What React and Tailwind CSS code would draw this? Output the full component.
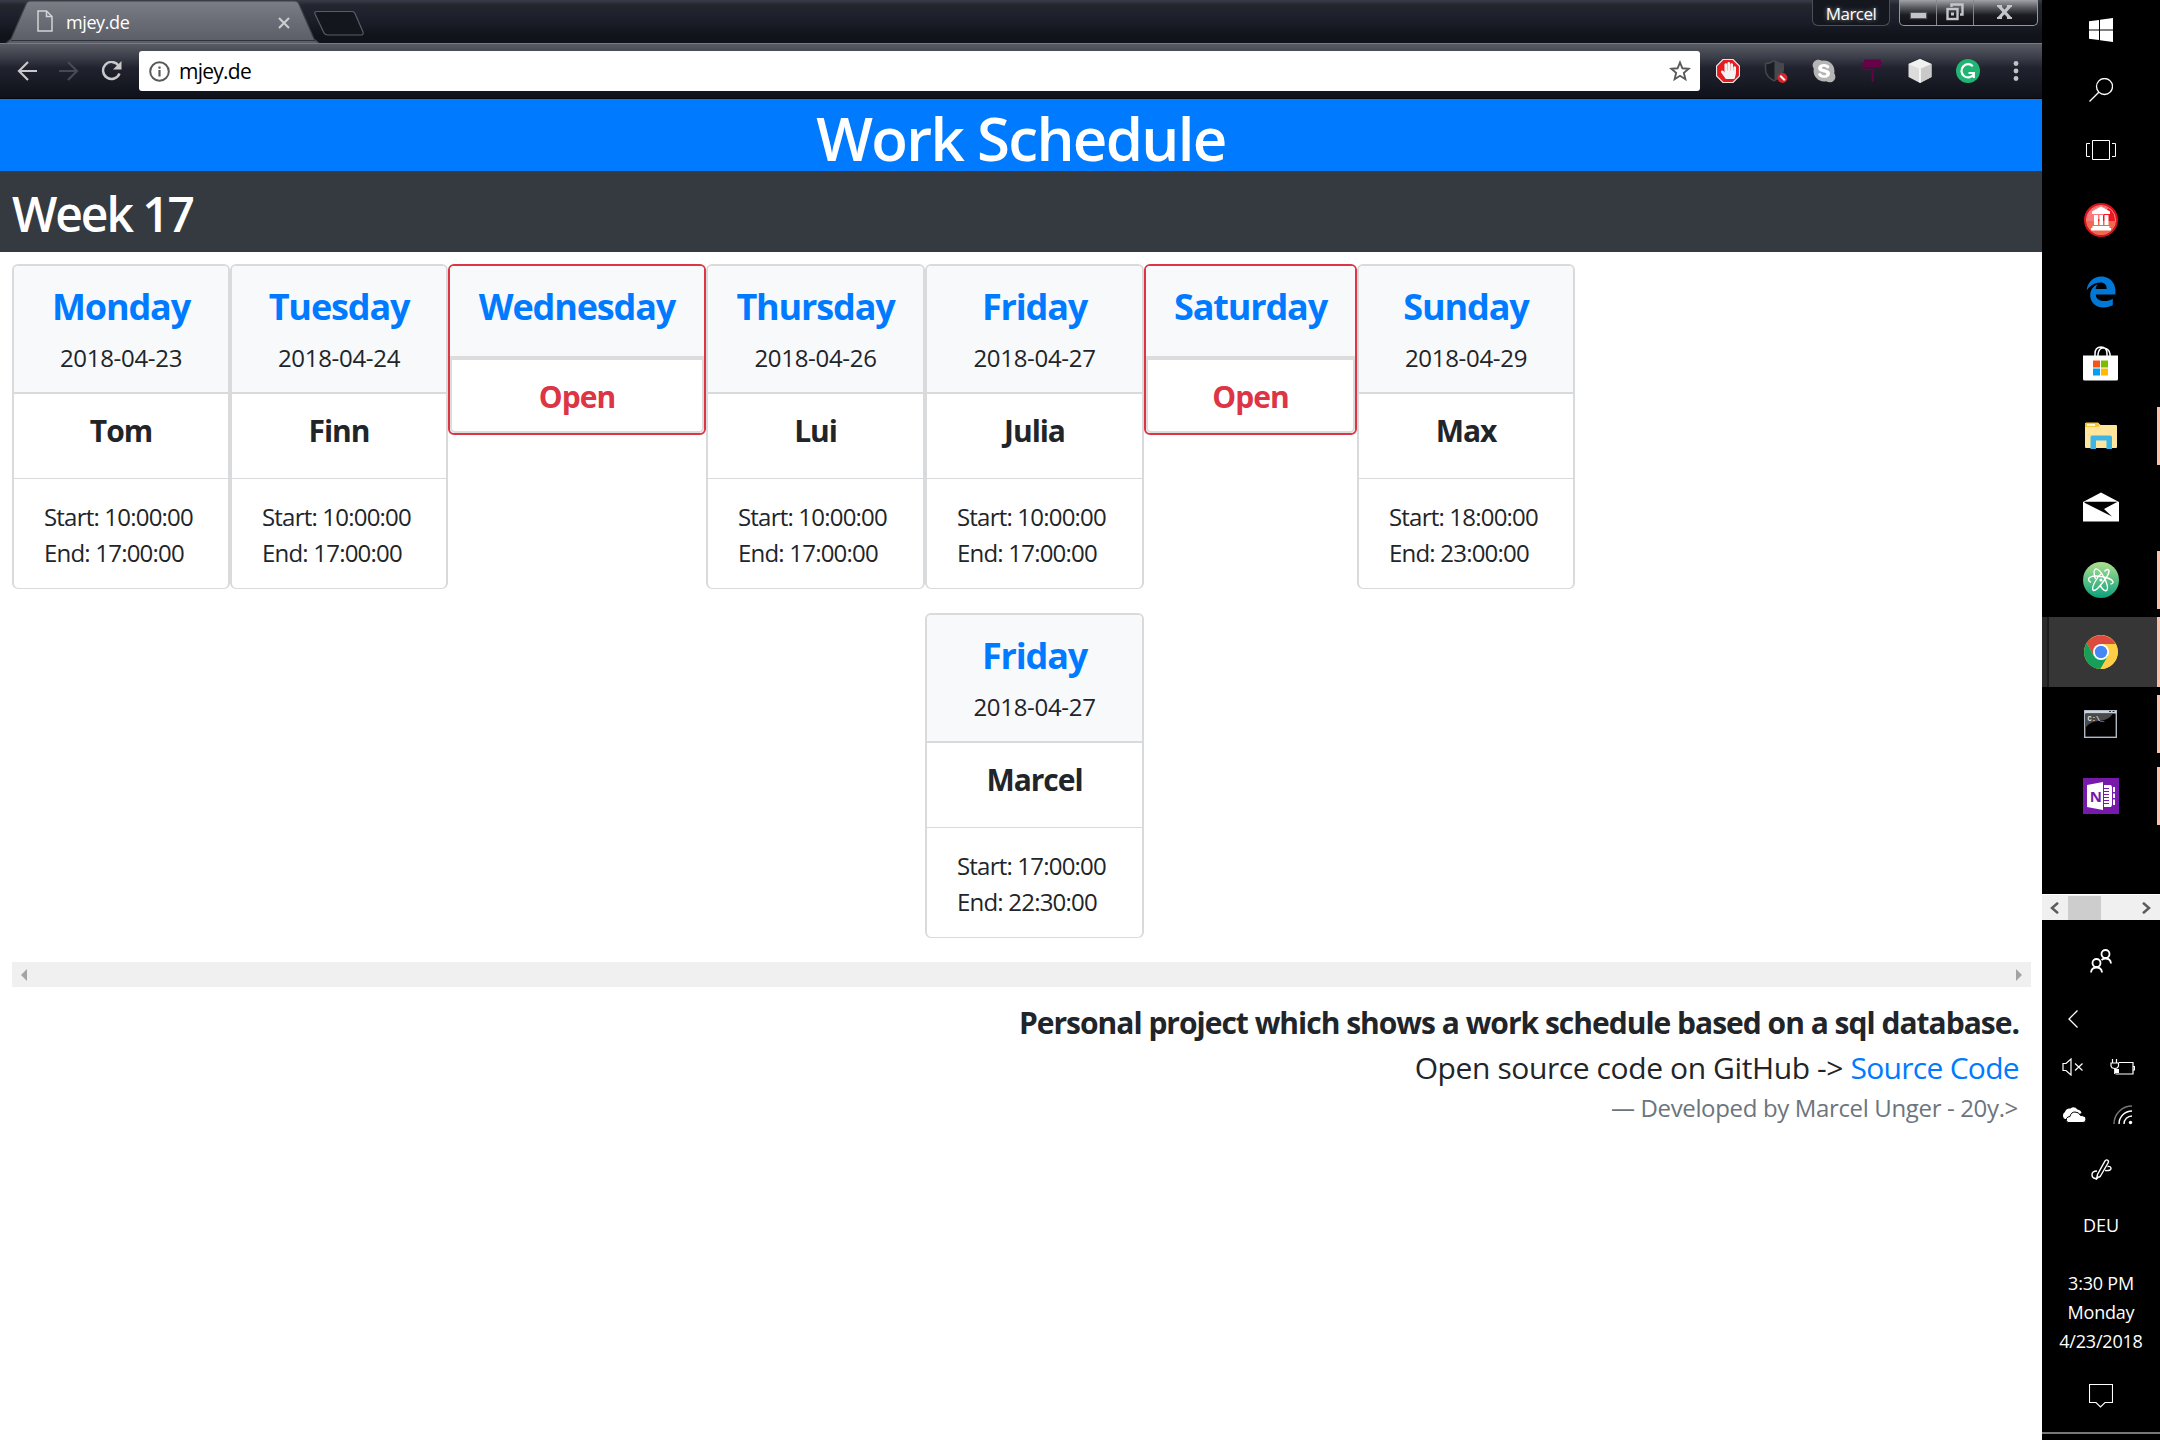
import React from "react";
import { FaEdgeLegacy, FaSkype, FaHandPaper } from "react-icons/fa";

const days = [
  { width: "w-[218px]", shifts: [{ day: "Monday", date: "2018-04-23", name: "Tom", start: "10:00:00", end: "17:00:00" }] },
  { width: "w-[218px]", shifts: [{ day: "Tuesday", date: "2018-04-24", name: "Finn", start: "10:00:00", end: "17:00:00" }] },
  { width: "w-[258px]", shifts: [{ day: "Wednesday", open: true }] },
  { width: "w-[219px]", shifts: [{ day: "Thursday", date: "2018-04-26", name: "Lui", start: "10:00:00", end: "17:00:00" }] },
  {
    width: "w-[219px]",
    shifts: [
      { day: "Friday", date: "2018-04-27", name: "Julia", start: "10:00:00", end: "17:00:00" },
      { day: "Friday", date: "2018-04-27", name: "Marcel", start: "17:00:00", end: "22:30:00" },
    ],
  },
  { width: "w-[213px]", shifts: [{ day: "Saturday", open: true }] },
  { width: "w-[218px]", shifts: [{ day: "Sunday", date: "2018-04-29", name: "Max", start: "18:00:00", end: "23:00:00" }] },
];

function DayTitle({ children }) {
  return (
    <h4 className="whitespace-nowrap text-center text-[36px] font-bold leading-[44px] tracking-[-1.15px] text-[#007bff]">{children}</h4>
  );
}

function OpenCard({ shift }) {
  return (
    <article className="h-[171px] overflow-hidden rounded-[6px] border-2 border-[#dc3545] bg-white">
      <header className="h-[90px] bg-[#f8f9fa] pt-[19px]">
        <DayTitle>{shift.day}</DayTitle>
      </header>
      <div className="h-[77px] rounded-b-[5px] border-2 border-t-4 border-[#dcdcdc] pt-[19px] text-center text-[30px] font-bold leading-9 tracking-[-1px] text-[#dc3545]">
        Open
      </div>
    </article>
  );
}

function ShiftCard({ shift }) {
  return (
    <article className="h-[325px] overflow-hidden rounded-[6px] border-2 border-b border-[#d9dadb] bg-white text-[#212529]">
      <header className="h-[128px] border-b-2 border-[#d9dadb] bg-[#f8f9fa] pt-[19px]">
        <DayTitle>{shift.day}</DayTitle>
        <p className="mt-[11px] text-center text-[24px] leading-9 tracking-[-0.3px]">{shift.date}</p>
      </header>
      <h5 className="h-[85px] border-b border-[#d9dadb] pt-[19px] text-center text-[30px] font-bold leading-9 tracking-[-1.05px]">
        {shift.name}
      </h5>
      <div className="whitespace-nowrap pl-[30px] pt-[20px] text-[24px] leading-9 tracking-[-0.8px]">
        <p>Start: {shift.start}</p>
        <p>End: {shift.end}</p>
      </div>
    </article>
  );
}

function BrowserTabs() {
  return (
    <div className="flex h-[43px] bg-[linear-gradient(#3a3c48,#23252f_5px,#1c1e29_20px,#11131a_36px,#11131a)]">
      <div className="relative h-[43px] w-[316px]">
        <svg className="absolute left-0 top-0" width="370" height="44" viewBox="0 0 370 44" fill="none">
          <defs>
            <linearGradient id="tab" x1="0" y1="0" x2="0" y2="1">
              <stop offset="0" stopColor="#7b7d85" />
              <stop offset="1" stopColor="#5a5c66" />
            </linearGradient>
          </defs>
          <path d="M7 43L11 39L26 4Q27 1 30 1H295Q298 1 299 4L314 39L319 43Z" fill="url(#tab)" />
          <path d="M6 43L11 39L26 4Q27 1 30 1H295Q298 1 299 4L314 39L319 43" stroke="#3d3f49" strokeWidth="1.2" />
          <path d="M11 40.5H315" stroke="#30323c" strokeWidth="1" />
          <path d="M317 11.5H352Q354 11.5 355 13.500L363 32Q364 35 361 35H328Q325 35 324 33L315 14Q314 11.500 317 11.500Z" stroke="#5b5d65" strokeWidth="1.2" fill="#14161e" />
        </svg>
        <div className="relative flex h-[43px] items-center pb-[1px] pl-[37px] pr-[26px]">
          <svg width="16" height="22" viewBox="0 0 16 22" fill="none" stroke="#d4d4d6" strokeWidth="1.5">
            <path d="M1 1H9.500L15 6.500V21H1Z" />
            <path d="M9.500 1V6.500H15" />
          </svg>
          <span className="ml-[13px] mt-[2px] text-[18px] leading-6 tracking-[-0.4px] text-white">mjey.de</span>
          <svg className="ml-auto mt-[3px]" width="12" height="12" viewBox="0 0 12 12" stroke="#cfcfd2" strokeWidth="2">
            <path d="M1 1L11 11M11 1L1 11" />
          </svg>
        </div>
      </div>
      <div className="ml-auto flex items-start pr-[4px]">
        <div className="h-[26px] w-[78px] rounded-b-[6px] border border-t-0 border-[#4c4e56] bg-[#15171f] text-center text-[17px] leading-[28px] tracking-[-0.5px] text-white [text-shadow:0_0_4px_#999]">
          Marcel
        </div>
        <div className="ml-[9px] flex h-[26px] overflow-hidden rounded-b-[5px] border border-t-0 border-[#96979b] bg-[linear-gradient(#a2a3a8,#5d5f66_7px,#1b1c22_15px,#101117)]">
          <div className="flex w-[37px] items-center justify-center border-r border-[#85868a] pt-[6px]">
            <div className="h-[5px] w-[15px] bg-[#c4c5c8] shadow-[0_0_1px_1px_#55565c]" />
          </div>
          <div className="flex w-[37px] items-center justify-center border-r border-[#85868a] pb-px">
            <svg width="18" height="18" viewBox="0 0 18 18" fill="none" stroke="#c4c5c8" strokeWidth="2.400">
              <path d="M5.500 4V1.500H16.500V11.500H14" />
              <rect x="1.500" y="6" width="10" height="10" />
              <rect x="5" y="9.500" width="3" height="3" fill="#c4c5c8" stroke="none" />
            </svg>
          </div>
          <div className="flex w-[63px] items-center justify-center pb-[2px] pr-[2px]">
            <svg width="15" height="14" viewBox="0 0 15 14" stroke="#c4c5c8" strokeWidth="3.200">
              <path d="M2 1L13 13M13 1L2 13" />
              <path d="M0 1H5M10 1H15M0 13H5M10 13H15" strokeWidth="2" />
            </svg>
          </div>
        </div>
      </div>
    </div>
  );
}

function Extension({ children }) {
  return <div className="flex w-12 items-center justify-center">{children}</div>;
}

function Toolbar() {
  return (
    <div className="flex h-14 items-center border-t border-[#797b82] bg-[linear-gradient(#585a64,#3c3e49_13px,#20222e_24px,#181a24_38px,#10121a_54px,#000_55px)] pb-px">
      <div className="flex w-[139px] items-center pl-[17px]">
        <svg width="20" height="20" viewBox="0 0 20 20" fill="none" stroke="#c9c9cb" strokeWidth="2.200">
          <path d="M20 10H2M11 1L2 10L11 19" />
        </svg>
        <svg className="ml-[22px]" width="20" height="20" viewBox="0 0 20 20" fill="none" stroke="#484a53" strokeWidth="2.200">
          <path d="M0 10H18M9 1L18 10L9 19" />
        </svg>
        <svg className="ml-[22px]" width="21" height="20" viewBox="0 0 21 20" fill="none" stroke="#c9c9cb" strokeWidth="2.400">
          <path d="M17.500 4.500A8.500 8.500 0 1 0 18.500 12.500" />
          <path d="M20.500 0V8.500H12Z" fill="#c9c9cb" stroke="none" />
        </svg>
      </div>
      <div className="flex h-10 w-[1561px] items-center rounded-[3px] bg-white pl-[10px] pr-[9px]">
        <svg width="21" height="21" viewBox="0 0 21 21" fill="none" stroke="#5a5a5a" strokeWidth="2">
          <circle cx="10.500" cy="10.500" r="9.300" />
          <path d="M10.500 9V15.500M10.500 5.500V7.700" strokeWidth="2.200" />
        </svg>
        <span className="ml-[9px] text-[21px] leading-[30px] tracking-[-0.75px] text-black">mjey.de</span>
        <svg className="ml-auto" width="22" height="22" viewBox="0 0 22 22" fill="none" stroke="#5a5a5a" strokeWidth="1.900">
          <path d="M11 2.500L13.400 8.300L19.700 8.800L14.900 12.900L16.400 19.200L11 15.800L5.600 19.200L7.100 12.900L2.300 8.800L8.600 8.300Z" />
        </svg>
      </div>
      <div className="ml-[4px] flex h-[26px]">
        <Extension>
          <div className="relative">
            <svg width="24" height="24" viewBox="0 0 24 24">
              <path d="M7 .5H17L23.500 7V17L17 23.500H7L.5 17V7Z" fill="#e61b20" stroke="#e8e8e8" strokeWidth="1.200" />
            </svg>
            <FaHandPaper className="absolute left-[5px] top-[2px] h-[19px] w-[15px] text-[#f3f3f3]" />
          </div>
        </Extension>
        <Extension>
          <svg width="24" height="24" viewBox="0 0 24 24">
            <path d="M10.500 1.500C7 3.800 4 4.500 1.500 4.500V11Q2 18 10.500 22" fill="#1b1d25" stroke="#46484d" strokeWidth="1.500" />
            <path d="M10.500 .5C14 3.500 17 4 20 4V11Q19 18 10.500 22.500Z" fill="#46484d" />
            <circle cx="18.500" cy="19" r="5" fill="#d9252b" />
            <path d="M16.200 16.700L20.800 21.300" stroke="#fff" strokeWidth="2" />
          </svg>
        </Extension>
        <Extension>
          <div className="relative flex h-[24px] w-[24px] items-center justify-center">
            <div className="absolute h-[16px] w-[14px] rounded-full bg-white" />
            <FaSkype className="relative h-[26px] w-[24px] text-[#b5b5b5]" />
          </div>
        </Extension>
        <Extension>
          <svg width="24" height="24" viewBox="0 0 24 24" fill="none" stroke="#660348">
            <path d="M4 1.500Q4 .5 5 .5H20Q21 .5 21 1.500V3H22V5H21V7Q21 8 20 8H5Q4 8 4 7Z" fill="#660348" stroke="none" />
            <path d="M4 4.500H1.800V10.500H12.700" strokeWidth="1.300" />
            <path d="M12.700 10.500V23" strokeWidth="2.200" />
          </svg>
        </Extension>
        <Extension>
          <svg width="24" height="24" viewBox="0 0 24 24">
            <path d="M12 0L23.500 5V18L12 24L.5 18V5Z" fill="#dcdcdc" />
            <path d="M12 0L23.500 5L12 10L.5 5Z" fill="#f1f1f1" />
            <path d="M12 10L23.500 5V18L12 24Z" fill="#c9c9c9" />
            <path d="M12 10V23.500" stroke="#fff" strokeWidth="1.500" />
          </svg>
        </Extension>
        <Extension>
          <svg width="24" height="24" viewBox="0 0 24 24" fill="none" stroke="#fff" strokeWidth="2.200">
            <circle cx="12" cy="12" r="12" fill="#20b573" stroke="none" />
            <path d="M16.800 7.200A6.600 6.600 0 1 0 17.500 15.600M12.500 14H17.800V19" />
          </svg>
        </Extension>
        <Extension>
          <svg width="6" height="20" viewBox="0 0 6 20" fill="#c4c4c6">
            <circle cx="3" cy="2.500" r="2.400" />
            <circle cx="3" cy="10" r="2.400" />
            <circle cx="3" cy="17.500" r="2.400" />
          </svg>
        </Extension>
      </div>
    </div>
  );
}

function Page() {
  return (
    <main className="flex-1 bg-white">
      <h1 className="h-[72px] bg-[#007bff] text-center text-[60px] font-semibold leading-[79px] tracking-[-1.7px] text-white">Work Schedule</h1>
      <h2 className="h-[81px] bg-[#343a40] pl-[12px] text-[48px] font-semibold leading-[85px] tracking-[-2.1px] text-white">Week 17</h2>
      <section className="flex h-[710px] items-start px-3 pt-3">
        {days.map((column) => (
          <div key={column.shifts[0].day} className={`flex flex-col gap-6 ${column.width}`}>
            {column.shifts.map((shift, i) =>
              shift.open ? <OpenCard key={i} shift={shift} /> : <ShiftCard key={i} shift={shift} />
            )}
          </div>
        ))}
      </section>
      <div className="mx-3 mr-[11px] flex h-[25px] items-center justify-between bg-[#f0f0f0] px-[9px]">
        <svg width="6" height="12" viewBox="0 0 6 12" fill="#a3a3a3"><path d="M6 0V12L0 6Z" /></svg>
        <svg width="6" height="12" viewBox="0 0 6 12" fill="#a3a3a3"><path d="M0 0V12L6 6Z" /></svg>
      </div>
      <footer className="pr-[23px] pt-[13px] text-right text-[#212529]">
        <p className="text-[30px] font-bold leading-[45px] tracking-[-1px]">Personal project which shows a work schedule based on a sql database.</p>
        <p className="text-[30px] leading-[45px] tracking-[-0.4px]">
          Open source code on GitHub -&gt; <a className="tracking-[-0.7px] text-[#007bff]">Source Code</a>
        </p>
        <p className="pr-px text-[24px] leading-9 tracking-[-0.35px] text-[#6c757d]">— Developed by Marcel Unger - 20y.&gt;</p>
      </footer>
    </main>
  );
}

function TaskSlot({ children, running, active }) {
  return (
    <div className="flex h-[72px] items-center">
      <div className={active ? "h-[70px] w-[5px] bg-[#2b2b2b]" : "w-[5px]"} />
      <div className={active ? "flex h-[70px] w-[110px] items-center justify-center border-l-2 border-[#1b1b1b] bg-[#363636] pr-[4px]" : "flex w-[110px] items-center justify-center pr-[2px]"}>
        {children}
      </div>
      {running && <div className={active ? "h-[70px] w-[3px] bg-[#ffbfab]" : "h-[58px] w-[3px] bg-[#ffbfab]"} />}
    </div>
  );
}

function Taskbar() {
  return (
    <aside className="flex w-[118px] flex-col bg-black text-white">
      <div className="flex h-[60px] items-center justify-center">
        <svg width="24" height="24" viewBox="0 0 24 24" fill="#fff">
          <path d="M0 3.300L10 2V11.400H0ZM11 1.800L24 0V11.400H11ZM0 12.400H10V22L0 20.700ZM11 12.400H24V24L11 22.200Z" />
        </svg>
      </div>
      <div className="flex h-[60px] items-center justify-center">
        <svg width="24" height="24" viewBox="0 0 24 24" fill="none" stroke="#fff" strokeWidth="1.300">
          <circle cx="15.500" cy="8.500" r="8" />
          <path d="M9.800 14.200L.5 23.500" />
        </svg>
      </div>
      <div className="flex h-[60px] items-center justify-center">
        <svg width="30" height="20" viewBox="0 0 30 20" fill="none" stroke="#fff">
          <path d="M6.500 .5H23.500V19.500H6.500ZM4 3.500H.5V16.500H4M26 3.500H29.500V16.500H26" />
        </svg>
      </div>
      <div className="mt-[4px]">
        <TaskSlot>
          <svg className="mb-px" width="34" height="34" viewBox="0 0 34 34">
            <circle cx="17" cy="17" r="17" fill="#d8131b" />
            <circle cx="17" cy="17" r="14.500" fill="#ee1620" stroke="#f58a86" strokeWidth="1" />
            <path d="M3 18H31A14 14 0 0 1 3 18Z" fill="#f0694f" />
            <path d="M3 18A14 14 0 0 1 24 5Q20 14 12 18Z" fill="#f77b7d" />
            <path d="M17 3.500L26 8.500V11H8V8.500ZM10 12H14V22H10ZM15.500 12H19V22H15.500ZM20.500 12H24.500V22H20.500ZM8.500 23H25.500V25H27V27.500H7V25H8.500Z" fill="#fff" />
          </svg>
        </TaskSlot>
        <TaskSlot>
          <FaEdgeLegacy className="h-[34px] w-[32px] text-[#0078d7]" />
        </TaskSlot>
        <TaskSlot>
          <svg className="mb-[2px]" width="36" height="36" viewBox="0 0 36 36">
            <path d="M12 12V9Q12 2 18 2Q24 2 24 9V12M15 12V9Q16 3 20 3Q26 3 27 9V12" fill="none" stroke="#fff" strokeWidth="1.500" />
            <path d="M0 10.500H35V34Q35 35.500 33.500 35.500H1.500Q0 35.500 0 34Z" fill="#fff" />
            <path d="M10 15.500H17V22.500H10Z" fill="#f65314" />
            <path d="M18 15.500H25V22.500H18Z" fill="#7cbb00" />
            <path d="M10 23.500H17V30.500H10Z" fill="#00a1f1" />
            <path d="M18 23.500H25V30.500H18Z" fill="#ffbb00" />
          </svg>
        </TaskSlot>
        <TaskSlot running>
          <svg width="32" height="28" viewBox="0 0 32 28">
            <path d="M1 1H13L15.500 3H31Q32 3 32 4V25Q32 26 31 26H1Q0 26 0 25V2Q0 1 1 1Z" fill="#ffe69c" />
            <path d="M1 .5H13L15.500 3L13 5H0V1.500Z" fill="#f9c63a" />
            <path d="M2 2.200H10V3.800H2Z" fill="#fff" />
            <path d="M5.500 27V15Q5.500 13.500 7 13.500H25Q27 13.500 27 15V27H21.500V18.500H11V27Z" fill="#3eb5e6" />
          </svg>
        </TaskSlot>
        <TaskSlot>
          <svg className="mb-[3px]" width="36" height="30" viewBox="0 0 36 30">
            <path d="M0 10L18 .5L36 10V29.500H0Z" fill="#fff" />
            <path d="M1.500 9.800H34.500L21 17L29 24.500L1.500 10.800Z" fill="#000" />
          </svg>
        </TaskSlot>
        <TaskSlot running>
          <svg width="36" height="36" viewBox="0 0 36 36" fill="none" stroke="#fff" strokeWidth="1.400">
            <defs>
              <linearGradient id="atom" x1="0" y1="0" x2="0" y2="1">
                <stop offset="0" stopColor="#aee08e" />
                <stop offset="1" stopColor="#0aa07a" />
              </linearGradient>
            </defs>
            <circle cx="18" cy="18" r="18" fill="url(#atom)" stroke="none" />
            <path d="M8 20.500Q4 18 6.500 15.500Q10 13 18 14.500Q28 16 30 19.500Q30.500 21.500 27.500 22" />
            <path d="M12.500 17Q9.500 9 12.500 7Q15.500 6 20.500 14.500Q26 24.500 24 28Q21.500 30.500 17 23.500" />
            <path d="M21.500 9.500Q24.500 6 26 8.500Q26.500 12 20 20Q13.500 29 10.500 28.500Q8 26.500 12.500 19Q15 14 19 11" />
            <circle cx="18" cy="18" r="1.600" fill="#fff" stroke="none" />
          </svg>
        </TaskSlot>
        <TaskSlot running active>
          <svg width="34" height="34" viewBox="0 0 34 34">
            <circle cx="17" cy="17" r="17" fill="#ffce44" />
            <path d="M17 17V9H31.700A17 17 0 0 0 2.600 8.100L10 21Z" fill="#db4b3f" />
            <path d="M2.600 8.100A17 17 0 0 0 16.500 34L24 21L17 17L10 21Z" fill="#159f5b" />
            <path d="M31.700 9H17L24 21L16.500 34A17 17 0 0 0 31.700 9Z" fill="#ffce44" />
            <circle cx="17" cy="17" r="8" fill="#fff" />
            <circle cx="17" cy="17" r="6.200" fill="#4587f4" />
          </svg>
        </TaskSlot>
        <TaskSlot running>
          <svg className="mb-px mr-px" width="33" height="28" viewBox="0 0 33 28">
            <rect x=".7" y=".7" width="31.600" height="26.600" fill="#000" stroke="#aebac3" strokeWidth="1.400" />
            <path d="M1 1H32V3.500H1Z" fill="#cdd5db" />
            <path d="M2 3.500H29Q24 11 14 11Q6 12 2 17Z" fill="#4a4a4a" />
            <path d="M25 1.500H27M28.500 1.500H30.500" stroke="#333" />
            <text x="3.500" y="10.500" fontSize="7" fontWeight="700" fill="#e6e6e6" fontFamily="Liberation Mono, monospace">C:\_</text>
          </svg>
        </TaskSlot>
        <TaskSlot running>
          <svg width="36" height="36" viewBox="0 0 36 36">
            <path d="M0 0H36V36H0Z" fill="#7719aa" />
            <path d="M4 7L20 4V32L4 29Z" fill="#fff" />
            <path d="M21 7H28L29 9V27L28 29H21ZM30 9H32V14H30ZM30 15.500H32V20H30ZM30 21.500H32V27H30Z" fill="#fff" />
            <path d="M21 10.500H26M21 13.500H26M21 16.500H26M21 19.500H26M21 22.500H26M21 25.500H26" stroke="#7719aa" strokeWidth="1" />
            <text x="6.800" y="23.500" fontSize="15" fontWeight="700" fill="#7719aa" fontFamily="Open Sans, sans-serif">N</text>
          </svg>
        </TaskSlot>
      </div>
      <div className="mt-[62px] flex h-[26px] items-center border-t border-white bg-[#f0f0f0]">
        <svg className="ml-[8px]" width="9" height="12" viewBox="0 0 9 12" fill="none" stroke="#5c5c5c" strokeWidth="2.500"><path d="M8 .8L2 6L8 11.200" /></svg>
        <div className="ml-[9px] h-6 w-[33px] bg-[#cdcdcd]" />
        <svg className="ml-auto mr-[9px]" width="9" height="12" viewBox="0 0 9 12" fill="none" stroke="#5c5c5c" strokeWidth="2.500"><path d="M1 .8L7 6L1 11.200" /></svg>
      </div>
      <div className="flex h-[82px] items-center justify-center">
        <svg width="22" height="24" viewBox="0 0 22 24" fill="none" stroke="#fff" strokeWidth="1.800">
          <circle cx="15.500" cy="5" r="4" />
          <circle cx="6.500" cy="14" r="4" />
          <path d="M1 23.500Q1.500 18.500 6.500 18.500Q11.500 18.500 12 23.500M11.500 11Q13 9.500 15.500 9.500Q20.500 9.500 21 14.500" />
        </svg>
      </div>
      <div className="flex h-[33px] items-center pl-[26px]">
        <svg width="10" height="18" viewBox="0 0 10 18" fill="none" stroke="#fff" strokeWidth="1.300"><path d="M9.500 .5L1 9L9.500 17.500" /></svg>
      </div>
      <div className="flex h-16 items-center pl-[20px]">
        <svg width="22" height="18" viewBox="0 0 22 18" fill="none" stroke="#fff" strokeWidth="1.200">
          <path d="M1 5.500H4L9 1V17L4 12.500H1ZM13 5.500L20.500 12.500M20.500 5.500L13 12.500" />
        </svg>
        <svg className="ml-[26px]" width="25" height="18" viewBox="0 0 25 18" fill="none" stroke="#fff" strokeWidth="1.200">
          <path d="M9 4.500H23V16H5.500M23 8.500H24.500V12H23" />
          <path d="M2.500 1V5M6.500 1V5M1 5H8.500V8Q8 10.500 4.700 10.500Q1.500 10.500 1 8ZM4.700 10.500V16" />
          <path d="M5 11H9V15H5Z" fill="#fff" stroke="none" />
        </svg>
      </div>
      <div className="flex h-[32px] items-center pl-[20px]">
        <svg width="24" height="16" viewBox="0 0 24 16">
          <path d="M3 12A4 4 0 0 1 3 5Q4 1 8.500 1.500Q12-1.500 15.500 2.500Q19 3 19.500 6L8 12Z" fill="#fff" />
          <path d="M6 15.500Q3.500 14 4.500 11.500Q5.500 9.500 8 9.500Q9 5 13 5Q17 5 18.500 8.500Q23.500 8.500 24 12Q24 15.500 21 15.500Z" fill="#fff" stroke="#000" />
        </svg>
        <svg className="ml-[27px]" width="20" height="20" viewBox="0 0 20 20" fill="none" stroke="#fff" strokeWidth="1.400">
          <path d="M1 19A18 18 0 0 1 19 1" stroke="#777" />
          <path d="M6 19A13 13 0 0 1 19 6M11 19A8 8 0 0 1 19 11" />
          <circle cx="17.500" cy="17.500" r="1.700" fill="#fff" stroke="none" />
        </svg>
      </div>
      <div className="flex h-[76px] items-center justify-center">
        <svg width="21" height="21" viewBox="0 0 21 21" fill="none" stroke="#fff" strokeWidth="1.400">
          <path d="M7.500 18L5.500 20L6.500 15.500L14 2Q15.500 0 17 1.500Q18 2.500 17 4L9.500 17Q8.500 18.500 7.500 18Z" />
          <path d="M6 12Q1 12 1 15.800Q1 19.500 5 19.500M14 11.500Q20 12 20 9.500Q20 7 16.500 7.500" />
        </svg>
      </div>
      <p className="mt-[3px] text-center text-[18px] leading-[30px]">DEU</p>
      <div className="mt-[29px] text-center text-[18px] leading-[29px] tracking-[-0.2px]">
        <p>3:30 PM</p>
        <p>Monday</p>
        <p>4/23/2018</p>
      </div>
      <div className="mt-[28px] flex justify-center">
        <svg width="24" height="24" viewBox="0 0 24 24" fill="none" stroke="#fff" strokeWidth="1.100">
          <path d="M.5 .5H23.500V18.500H16L11.500 23L7 18.500H.5Z" />
        </svg>
      </div>
      <div className="mb-[6px] mt-auto h-[2px] bg-[#777]" />
    </aside>
  );
}

export default function App() {
  return (
    <div className="flex h-[1440px] w-[2160px] overflow-hidden font-['Open_Sans','Noto_Sans',sans-serif]">
      <div className="flex w-[2042px] flex-col">
        <BrowserTabs />
        <Toolbar />
        <Page />
      </div>
      <Taskbar />
    </div>
  );
}
